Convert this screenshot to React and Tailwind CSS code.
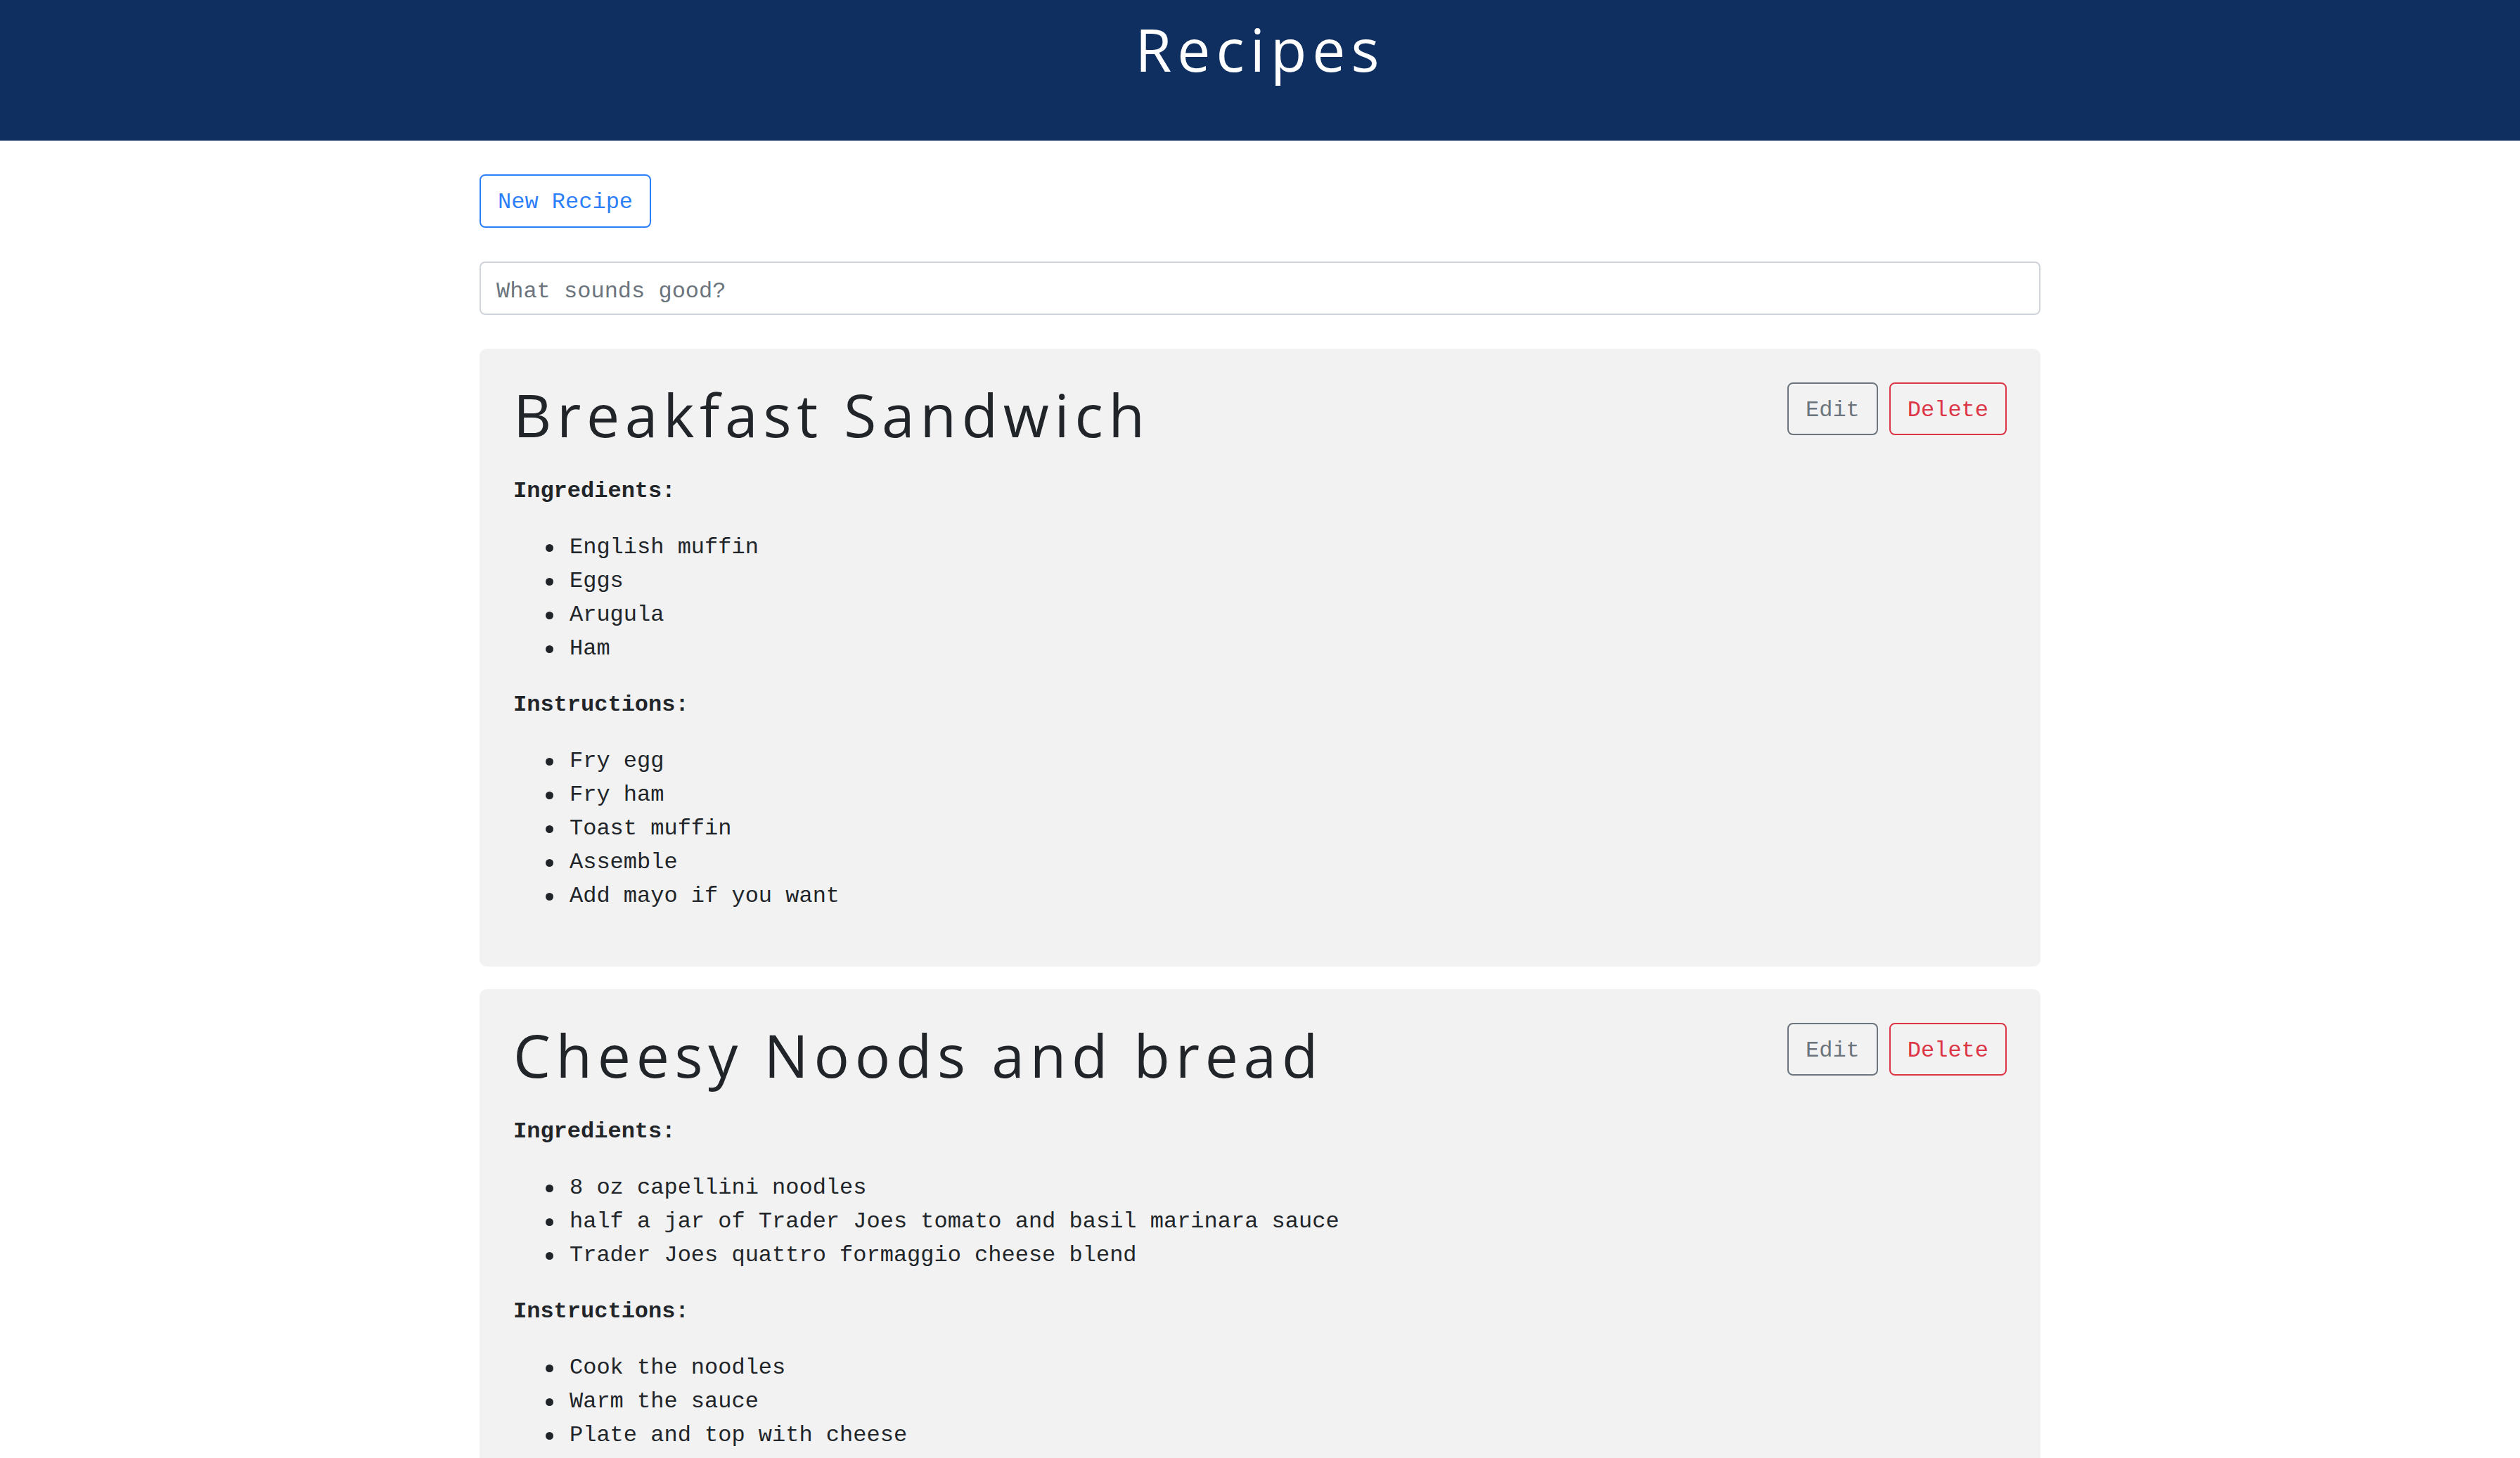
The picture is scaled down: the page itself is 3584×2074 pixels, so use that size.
const recipes = [
  {
    name: 'Breakfast Sandwich',
    ingredients: ['English muffin', 'Eggs', 'Arugula', 'Ham'],
    instructions: ['Fry egg', 'Fry ham', 'Toast muffin', 'Assemble', 'Add mayo if you want'],
  },
  {
    name: 'Cheesy Noods and bread',
    ingredients: [
      '8 oz capellini noodles',
      'half a jar of Trader Joes tomato and basil marinara sauce',
      'Trader Joes quattro formaggio cheese blend',
    ],
    instructions: ['Cook the noodles', 'Warm the sauce', 'Plate and top with cheese'],
  },
]

const mono = "font-['Liberation_Mono','DejaVu_Sans_Mono',monospace]"
const display = "font-['Open_Sans','Noto_Sans',sans-serif]"

function Bullets({ items }) {
  return (
    <ul className="mb-[32px]">
      {items.map(i => (
        <li key={i} className="flex items-center">
          <span className="ml-[46px] mr-[23px] w-[11px] h-[11px] rounded-full bg-[#212529] shrink-0" />
          <span>{i}</span>
        </li>
      ))}
    </ul>
  )
}

function RecipeCard({ recipe }) {
  return (
    <div className="bg-[#f2f2f2] rounded-[10px] pt-[48px] px-[48px] pb-[44px] mb-[32px]">
      <div className="flex items-start justify-between mb-[40px]">
        <h1 className={`${display} text-[84px] leading-[91px] tracking-[7.7px] text-[#212529] font-normal`}>{recipe.name}</h1>
        <div className="flex gap-[16px]">
          <button className="h-[75px] px-[24px] pt-[4px] border-2 border-[#6c757d] text-[#6c757d] rounded-[8px] text-[32px] leading-[48px]">Edit</button>
          <button className="h-[75px] px-[24px] pt-[4px] border-2 border-[#dc3545] text-[#dc3545] rounded-[8px] text-[32px] leading-[48px]">Delete</button>
        </div>
      </div>
      <p className="font-bold mb-[32px]">Ingredients:</p>
      <Bullets items={recipe.ingredients} />
      <p className="font-bold mb-[32px]">Instructions:</p>
      <Bullets items={recipe.instructions} />
    </div>
  )
}

export default function App() {
  return (
    <div className={`min-h-screen bg-white text-[#212529] text-[32px] leading-[48px] ${mono}`}>
      <header className="h-[200px] bg-[#0e2f5f] pt-[28px] text-center">
        <h1 className={`${display} text-[84px] leading-none tracking-[8px] text-white font-normal`}>Recipes</h1>
      </header>

      <main className="w-[2220px] mx-auto pt-[48px]">
        <button className="h-[76px] px-[24px] pt-[4px] border-2 border-[#2d7ff9] text-[#2d7ff9] rounded-[8px] text-[32px] leading-[48px] mb-[48px]">New Recipe</button>
        <input
          type="text"
          placeholder="What sounds good?"
          className="block w-full h-[76px] px-[22px] pt-[8px] border-2 border-[#ced4da] rounded-[8px] text-[32px] outline-none placeholder:text-[#6c757d] mb-[48px]"
        />
        {recipes.map(r => <RecipeCard key={r.name} recipe={r} />)}
      </main>
    </div>
  )
}
